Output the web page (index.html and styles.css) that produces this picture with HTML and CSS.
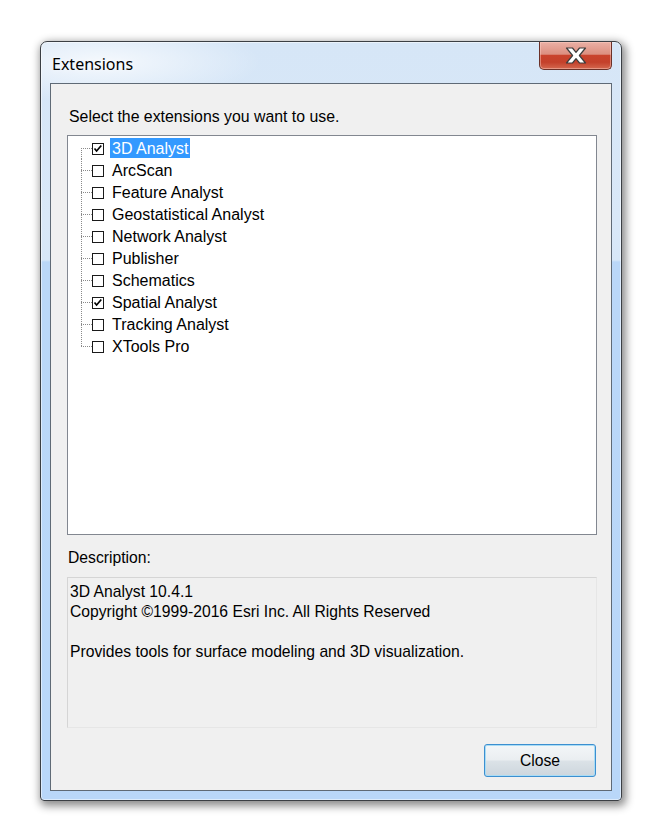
FILE: index.html
```html
<!DOCTYPE html>
<html>
<head>
<meta charset="utf-8">
<link rel="stylesheet" href="styles.css">
</head>
<body>
<div class="window">
  <div class="titlebar">
    <span class="title">Extensions</span>
    <div class="caption-close">
      <svg width="22" height="17" viewBox="0 0 22 17">
        <path d="M1.5 1 L7.5 1 L11 5.3 L14.5 1 L20.5 1 L14.4 8.5 L20.5 16 L14.5 16 L11 11.7 L7.5 16 L1.5 16 L7.6 8.5 Z" fill="#fff" stroke="#3d3d3d" stroke-width="1.2" stroke-linejoin="round"/>
      </svg>
    </div>
  </div>
  <div class="client">
    <div class="prompt">Select the extensions you want to use.</div>
    <div class="listbox">
      <ul class="tree">
        <li class="row first"><span class="check on"><svg width="10" height="10" viewBox="0 0 10 10"><polyline points="1.5,4.5 3.6,7 8.3,1.5" fill="none" stroke="#000" stroke-width="1.7"/></svg></span><span class="label selected">3D Analyst</span></li>
        <li class="row"><span class="check"></span><span class="label">ArcScan</span></li>
        <li class="row"><span class="check"></span><span class="label">Feature Analyst</span></li>
        <li class="row"><span class="check"></span><span class="label">Geostatistical Analyst</span></li>
        <li class="row"><span class="check"></span><span class="label">Network Analyst</span></li>
        <li class="row"><span class="check"></span><span class="label">Publisher</span></li>
        <li class="row"><span class="check"></span><span class="label">Schematics</span></li>
        <li class="row"><span class="check on"><svg width="10" height="10" viewBox="0 0 10 10"><polyline points="1.5,4.5 3.6,7 8.3,1.5" fill="none" stroke="#000" stroke-width="1.7"/></svg></span><span class="label">Spatial Analyst</span></li>
        <li class="row"><span class="check"></span><span class="label">Tracking Analyst</span></li>
        <li class="row last"><span class="check"></span><span class="label">XTools Pro</span></li>
      </ul>
    </div>
    <div class="desc-label">Description:</div>
    <div class="desc">
      <div>3D Analyst 10.4.1</div>
      <div>Copyright ©1999-2016 Esri Inc. All Rights Reserved</div>
      <div class="blank"></div>
      <div>Provides tools for surface modeling and 3D visualization.</div>
    </div>
    <div class="btn-row"><button class="btn">Close</button></div>
  </div>
</div>
</body>
</html>
```
FILE: styles.css
```css
html, body {
  margin: 0;
  padding: 0;
  background: #ffffff;
}
body {
  width: 660px;
  height: 832px;
  overflow: hidden;
  font-family: "Liberation Sans", Arial, sans-serif;
}
.window {
  margin: 41px 0 0 40px;
  width: 582px;
  height: 760px;
  box-sizing: border-box;
  border: 1px solid #3b3f44;
  border-radius: 7px 7px 4px 4px;
  background:
    radial-gradient(ellipse 160px 40px at 60px 20px, rgba(255,255,255,0.75), rgba(255,255,255,0) 100%),
    linear-gradient(to bottom, #d6e6f7 0px, #d9e8f8 180px, #d7e7f8 218px, #bad7f8 220px, #b9d7f9 100%);
  box-shadow: 2px 3px 9px 2px rgba(0,0,0,0.45), inset 0 0 0 1px rgba(255,255,255,0.5);
  display: flex;
  flex-direction: column;
}
.titlebar {
  height: 41px;
  display: flex;
  align-items: center;
  justify-content: space-between;
  padding-left: 11px;
}
.title {
  font-family: "Noto Sans", "Open Sans", sans-serif;
  font-size: 16px;
  color: #000;
  text-shadow: 0 0 6px rgba(255,255,255,0.9);
  margin-top: 2px;
}
.caption-close {
  align-self: flex-start;
  margin-right: 9px;
  width: 73px;
  height: 28px;
  box-sizing: border-box;
  border: 1px solid #6b3128;
  border-top: none;
  border-radius: 0 0 5px 5px;
  background: linear-gradient(to bottom, #eab0a5 0%, #dc8f80 45%, #c9432d 50%, #c4412b 75%, #d4684f 100%);
  box-shadow: inset 0 0 0 1px rgba(255,210,200,0.45);
  display: flex;
  align-items: center;
  justify-content: center;
}
.caption-close svg {
  display: block;
}
.client {
  margin: 0 9px;
  height: 708px;
  box-sizing: border-box;
  border: 1px solid #5f6a76;
  background: #f0f0f0;
  display: flex;
  flex-direction: column;
  font-size: 15.7px;
  color: #000;
}
.prompt {
  margin: 23px 0 0 18px;
  line-height: 20px;
  font-size: 15.85px;
}
.listbox {
  margin: 8px 0 0 16px;
  width: 530px;
  height: 400px;
  box-sizing: border-box;
  border: 1px solid #828790;
  background: #ffffff;
  padding-top: 1px;
  font-size: 16px;
}
.tree {
  list-style: none;
  margin: 0;
  padding: 0;
}
.row {
  position: relative;
  height: 22px;
  display: flex;
  align-items: center;
  padding-left: 24px;
}
.row::before {
  content: "";
  position: absolute;
  left: 13px;
  top: 0;
  height: 22px;
  width: 1px;
  background: repeating-linear-gradient(to bottom, #8a8a8a 0 1px, transparent 1px 2px);
}
.row.first::before {
  top: 11px;
  height: 11px;
}
.row.last::before {
  height: 12px;
}
.row::after {
  content: "";
  position: absolute;
  left: 13px;
  top: 11px;
  width: 11px;
  height: 1px;
  background: repeating-linear-gradient(to right, #8a8a8a 0 1px, transparent 1px 2px);
}
.check {
  width: 12px;
  height: 12px;
  box-sizing: border-box;
  border: 1px solid #1a1a1a;
  background: #fff;
  display: flex;
  align-items: center;
  justify-content: center;
  margin-top: 1px;
}
.check svg {
  display: block;
}
.label {
  margin-left: 6px;
  padding: 1px 2px 0 2px;
  height: 20px;
  box-sizing: border-box;
  line-height: 20px;
  white-space: nowrap;
}
.label.selected {
  background: #3399ff;
  color: #ffffff;
}
.desc-label {
  margin: 13px 0 0 17px;
  line-height: 20px;
}
.desc {
  margin: 9px 0 0 16px;
  width: 530px;
  height: 151px;
  box-sizing: border-box;
  border: 1px solid #d5d5d5;
  border-right-color: #e6e6e6;
  border-bottom-color: #e6e6e6;
  padding: 4px 0 0 2px;
  line-height: 20px;
}
.desc .blank {
  height: 20px;
}
.btn-row {
  margin: 16px 0 0 433px;
}
.btn {
  width: 112px;
  height: 33px;
  box-sizing: border-box;
  border: 1px solid #3c8fd0;
  border-radius: 3px;
  background: linear-gradient(to bottom, #f3f6f8 0%, #eaeef1 48%, #dbe2e7 52%, #cdd6dd 100%);
  box-shadow: inset 0 0 0 1px #a9dcf5;
  font-family: "Liberation Sans", Arial, sans-serif;
  font-size: 15.7px;
  color: #000;
  padding: 0;
}
```
